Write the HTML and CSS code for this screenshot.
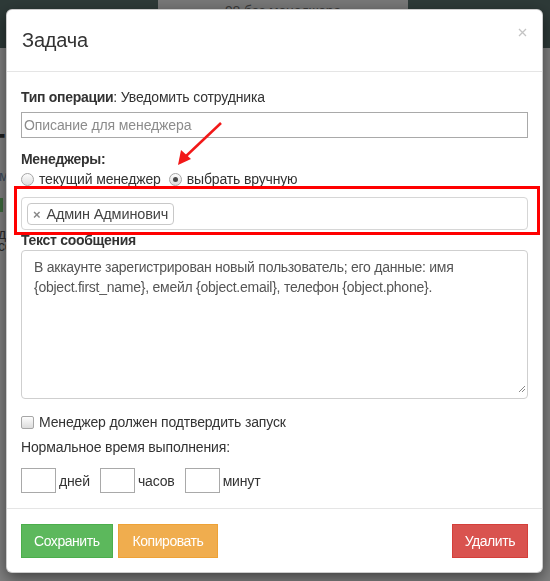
FILE: index.html
```html
<!DOCTYPE html>
<html lang="ru">
<head>
    <meta charset="UTF-8">
    <meta name="viewport" content="width=device-width, initial-scale=1.0">
    <title>Задача</title>
    <link rel="stylesheet" href="styles.css">
</head>
<body>
<div class="page">
    <div class="topbar">
        <div class="topbar-tab">98 без менеджера</div>
    </div>
    <div class="page-side">
        <div class="side-plus">+</div>
        <div class="side-link">м</div>
        <div class="side-green"></div>
        <div class="side-text">да<br>сс</div>
    </div>
</div>

<div class="modal">
    <div class="modal-header">
        <h4 class="modal-title">Задача</h4>
        <span class="close">
            <svg width="9" height="9" viewBox="0 0 9 9"><path d="M1 1 L8 8 M8 1 L1 8" stroke="#c4c4c4" stroke-width="1.3"/></svg>
        </span>
    </div>

    <div class="modal-body">
        <div class="line"><b>Тип операции</b>: Уведомить сотрудника</div>
        <input type="text" class="desc-input" placeholder="Описание для менеджера">

        <div class="line group-label"><b>Менеджеры:</b></div>
        <div class="line radios">
            <label><span class="radio"></span>текущий менеджер</label>
            <label><span class="radio checked"></span>выбрать вручную</label>
        </div>

        <div class="pick">
            <span class="tag"><span class="tag-x">×</span>Админ Админович</span>
            <div class="highlight"></div>
        </div>

        <div class="line"><b>Текст сообщения</b></div>
        <div class="message">
            В аккаунте зарегистрирован новый пользователь; его данные: имя {object.first_name}, емейл {object.email}, телефон {object.phone}.
            <span class="grip">
                <svg width="9" height="9" viewBox="0 0 9 9"><path d="M8 2 L2 8 M8 5 L5 8" stroke="#888" stroke-width="1"/></svg>
            </span>
        </div>

        <div class="line confirm"><span class="check"></span>Менеджер должен подтвердить запуск</div>
        <div class="line normal-time">Нормальное время выполнения:</div>
        <div class="duration">
            <span class="num"></span><span class="unit">дней</span>
            <span class="num"></span><span class="unit">часов</span>
            <span class="num"></span><span class="unit">минут</span>
        </div>
    </div>

    <div class="modal-footer">
        <button class="btn btn-success">Сохранить</button>
        <button class="btn btn-warning">Копировать</button>
        <button class="btn btn-danger">Удалить</button>
    </div>
</div>

<svg class="arrow" width="550" height="581" viewBox="0 0 550 581">
    <path d="M221 123 L184 158" stroke="#f21818" stroke-width="2.5" fill="none"/>
    <path d="M178 165 L181 150 L191 159 Z" fill="#f21818"/>
</svg>
</body>
</html>
```

FILE: styles.css
```css
body {
    margin: 0;
    font-family: "Liberation Sans", Arial, sans-serif;
    font-size: 14px;
    letter-spacing: -0.15px;
    color: #333;
    background-color: #808080;
    overflow: hidden;
}

/* page behind the modal, already dimmed */
.page {
    height: 581px;
}

.topbar {
    height: 48px;
    background-color: #2e3a38;
    display: flex;
}

.topbar-tab {
    margin-left: 158px;
    width: 250px;
    background-color: #787878;
    color: #3a3a3a;
    font-size: 14px;
    padding-top: 3px;
    text-align: center;
    box-sizing: border-box;
}

.page-side {
    margin-left: -14px;
    padding-top: 72px;
}

.side-plus {
    font-size: 34px;
    font-weight: bold;
    color: #1e1e1e;
    line-height: 30px;
}

.side-link {
    margin-top: 18px;
    color: #3d4b5c;
    margin-left: 13px;
}

.side-green {
    margin-top: 14px;
    width: 17px;
    height: 14px;
    background-color: #3d6b3d;
}

.side-text {
    margin-top: 16px;
    margin-left: 12px;
    color: #2a2a2a;
    line-height: 12px;
}

/* modal */
.modal {
    position: fixed;
    top: 9px;
    left: 6px;
    width: 537px;
    box-sizing: border-box;
    background-color: #fff;
    border: 1px solid rgba(0, 0, 0, 0.2);
    border-radius: 6px;
    box-shadow: 0 5px 15px rgba(0, 0, 0, 0.5);
}

.modal-header {
    padding: 15px 14px;
    border-bottom: 1px solid #e5e5e5;
    display: flex;
    justify-content: space-between;
}

.modal-title {
    margin: 0;
    font-size: 20px;
    font-weight: normal;
    line-height: 31px;
    padding-left: 1px;
    letter-spacing: -0.2px;
}

.close {
    margin-top: -1px;
    margin-right: 1px;
}

.modal-body {
    padding: 15px 14px;
}

.line {
    line-height: 20px;
}

.line b {
    letter-spacing: -0.3px;
}

.desc-input {
    display: block;
    width: 100%;
    height: 26px;
    box-sizing: border-box;
    margin-top: 5px;
    border: 1px solid #a9a9a9;
    padding: 0 2px;
    font-family: inherit;
    font-size: 14px;
    letter-spacing: -0.1px;
}

.desc-input::placeholder {
    color: #8c8c8c;
}

.group-label {
    margin-top: 11px;
}

.radios {
    display: flex;
    gap: 8px;
}

.radios label {
    display: flex;
    align-items: center;
}

.radio {
    width: 11px;
    height: 11px;
    border: 1px solid #a6a6a6;
    border-radius: 50%;
    background: linear-gradient(#fdfdfd, #dcdcdc);
    margin-right: 5px;
    display: flex;
    align-items: center;
    justify-content: center;
}

.radio.checked::after {
    content: "";
    width: 5px;
    height: 5px;
    border-radius: 50%;
    background-color: #4a4a4a;
}

.pick {
    position: relative;
    margin-top: 8px;
    height: 33px;
    box-sizing: border-box;
    border: 1px solid #d6d6d6;
    border-radius: 4px;
    padding: 5px 5px;
}

.tag {
    display: inline-flex;
    align-items: center;
    height: 22px;
    box-sizing: border-box;
    border: 1px solid #c8c8c8;
    border-radius: 4px;
    padding: 0 5px;
    font-size: 14.5px;
    color: #444;
}

.tag-x {
    color: #888;
    font-weight: bold;
    font-size: 13px;
    margin-right: 6px;
}

.highlight {
    position: absolute;
    left: -8px;
    right: -13px;
    top: -12px;
    bottom: -6px;
    border: 3px solid #ff0000;
}

.message {
    position: relative;
    height: 149px;
    box-sizing: border-box;
    border: 1px solid #cfcfcf;
    border-radius: 4px;
    padding: 6px 12px;
    line-height: 20px;
    color: #555;
    letter-spacing: -0.25px;
}

.grip {
    position: absolute;
    right: 1px;
    bottom: 0;
}

.confirm {
    margin-top: 13px;
    display: flex;
    align-items: center;
}

.check {
    width: 11px;
    height: 11px;
    border: 1px solid #a6a6a6;
    border-radius: 2px;
    background: linear-gradient(#fdfdfd, #dcdcdc);
    margin-right: 5px;
}

.normal-time {
    margin-top: 5px;
}

.duration {
    margin-top: 11px;
    display: flex;
    align-items: center;
}

.num {
    width: 35px;
    height: 25px;
    box-sizing: border-box;
    border: 1px solid #a9a9a9;
}

.unit {
    margin: 0 10px 0 3px;
}

.modal-footer {
    padding: 15px 14px 14px;
    border-top: 1px solid #e5e5e5;
    display: flex;
    gap: 5px;
}

.btn {
    height: 34px;
    padding: 0 12px;
    font-family: inherit;
    font-size: 14px;
    letter-spacing: -0.45px;
    color: #fff;
    border: 1px solid transparent;
    border-radius: 0;
}

.btn-success {
    background-color: #5cb85c;
    border-color: #4cae4c;
}

.btn-warning {
    padding: 0 14px;
    background-color: #f0ad4e;
    border-color: #eea236;
}

.btn-danger {
    margin-left: auto;
    background-color: #d9534f;
    border-color: #d43f3a;
}

.arrow {
    position: fixed;
    top: 0;
    left: 0;
    pointer-events: none;
}
```
